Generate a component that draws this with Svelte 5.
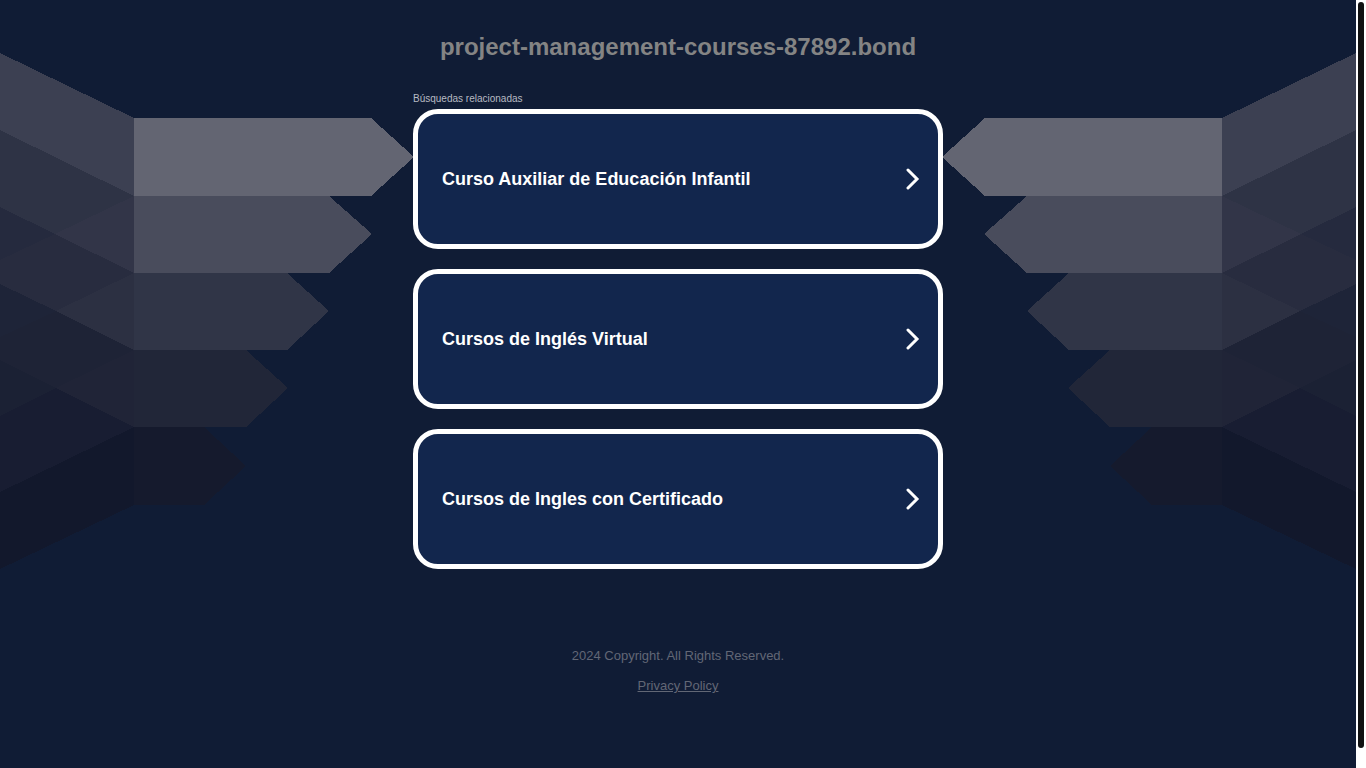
<script lang="ts">
  const domain = "project-management-courses-87892.bond";

  const links = [
    "Curso Auxiliar de Educación Infantil",
    "Cursos de Inglés Virtual",
    "Cursos de Ingles con Certificado",
  ];

  // folded part of the wing, outer edge to the fold at x = 133
  const folds = [
    { points: "0,53 134,118 134,196 0,130", fill: "#3c4052" },
    { points: "0,130 134,196 55,234 0,207", fill: "#2e3345" },
    { points: "134,196 134,273 55,234", fill: "#323548" },
    { points: "0,207 55,234 0,260", fill: "#252a3e" },
    { points: "0,260 55,234 134,273 56,311 0,284", fill: "#282c3f" },
    { points: "134,273 134,350 56,311", fill: "#2c3042" },
    { points: "0,284 56,311 0,337", fill: "#1e2438" },
    { points: "0,337 56,311 134,350 56,388 0,360", fill: "#1e2336" },
    { points: "134,350 134,427 56,388", fill: "#202437" },
    { points: "0,360 56,388 0,416", fill: "#1b2134" },
    { points: "0,416 56,388 134,427 0,492", fill: "#181d32" },
    { points: "0,492 134,427 134,505 0,569", fill: "#12182c" },
  ];

  const arrows = [
    { points: "134,118 371,118 414,157 371,196 134,196", fill: "#636572" },
    { points: "134,196 329,196 372,234 329,273 134,273", fill: "#494c5c" },
    { points: "134,273 287,273 329,311 287,350 134,350", fill: "#303547" },
    { points: "134,350 246,350 288,388 246,427 134,427", fill: "#212638" },
    { points: "134,427 204,427 246,466 204,505 134,505", fill: "#151a2d" },
  ];
</script>

{#snippet wing(side: string)}
  <svg class="wing {side}" viewBox="0 0 413 600" aria-hidden="true">
    {#each folds as f}<polygon points={f.points} fill={f.fill} />{/each}
    {#each arrows as a}<polygon points={a.points} fill={a.fill} />{/each}
  </svg>
{/snippet}

<div class="page">
  <div class="stage">
    {@render wing("left")}
    {@render wing("right")}

    <header>
      <h1>{domain}</h1>
    </header>

    <main>
      <h2>Búsquedas relacionadas</h2>
      <ul>
        {#each links as link}
          <li>
            <a class="card" href="#search">
              <span>{link}</span>
              <svg class="chevron" viewBox="0 0 14 22" aria-hidden="true">
                <path d="M2 2 11 11 2 20" />
              </svg>
            </a>
          </li>
        {/each}
      </ul>
    </main>

    <footer>
      <p>2024 Copyright. All Rights Reserved.</p>
      <a href="#privacy">Privacy Policy</a>
    </footer>
  </div>

  <div class="track"><div class="thumb"></div></div>
</div>

<style>
  :global(body) {
    margin: 0;
    background: #fff;
  }
  .page {
    display: grid;
    grid-template-columns: minmax(0, 1fr) 10px;
    min-height: 100vh;
    font-family: "Liberation Sans", Arial, sans-serif;
  }
  .stage {
    position: relative;
    overflow: hidden;
    background: #101c35;
  }
  .track {
    display: flex;
    padding: 2px 2px 20px;
  }
  .thumb {
    flex: 1;
    border-radius: 3px;
    background: #111;
  }
  .wing {
    position: absolute;
    top: 0;
    width: 413px;
    height: 600px;
    shape-rendering: crispEdges;
  }
  .left {
    right: calc(50% + 265px);
  }
  .right {
    left: calc(50% + 265px);
    transform: scaleX(-1);
  }
  header {
    position: relative;
    padding: 33px 0 31px;
    text-align: center;
  }
  h1 {
    margin: 0;
    font-size: 24px;
    line-height: 28px;
    color: #848484;
  }
  main {
    position: relative;
    max-width: 530px;
    margin: 0 auto;
  }
  h2 {
    margin: 0 0 4px;
    font-size: 10px;
    font-weight: 400;
    line-height: 13px;
    color: #b7bac2;
  }
  ul {
    display: grid;
    gap: 20px;
    list-style: none;
    margin: 0;
    padding: 0;
  }
  .card {
    display: flex;
    align-items: center;
    justify-content: space-between;
    box-sizing: border-box;
    min-height: 140px;
    padding: 0 18px 0 24px;
    border: 5px solid #fff;
    border-radius: 25px;
    background: #12264d;
    color: #fff;
    font-size: 18px;
    font-weight: 700;
    line-height: 22px;
    text-decoration: none;
  }
  .chevron {
    width: 14px;
    height: 22px;
    fill: none;
    stroke: #fff;
    stroke-width: 3;
    stroke-linecap: round;
  }
  footer {
    position: relative;
    padding: 79px 0 60px;
    text-align: center;
    font-size: 13px;
    line-height: 15px;
    color: #626775;
  }
  footer p {
    margin: 0 0 15px;
  }
  footer a {
    color: inherit;
  }
</style>
